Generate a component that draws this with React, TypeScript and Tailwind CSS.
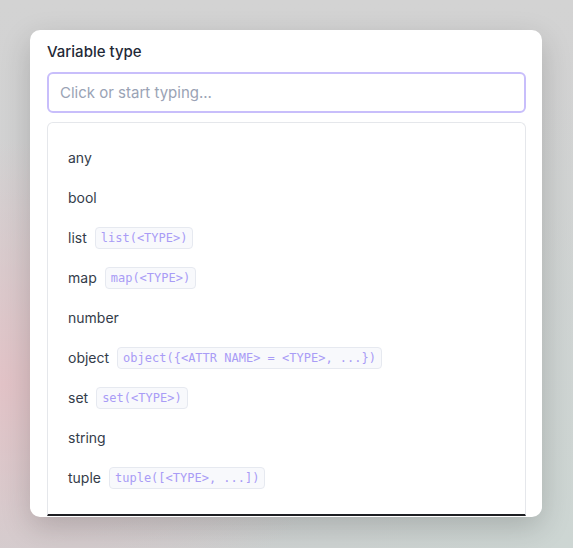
const types: { name: string; hint?: string }[] = [
  { name: "any" },
  { name: "bool" },
  { name: "list", hint: "list(<TYPE>)" },
  { name: "map", hint: "map(<TYPE>)" },
  { name: "number" },
  { name: "object", hint: "object({<ATTR NAME> = <TYPE>, ...})" },
  { name: "set", hint: "set(<TYPE>)" },
  { name: "string" },
  { name: "tuple", hint: "tuple([<TYPE>, ...])" },
];

export default function App() {
  return (
    <div className="w-[573px] h-[548px] overflow-hidden bg-[#cfd0d1] bg-[radial-gradient(ellipse_at_0%_70%,#e2c3c7_0%,rgba(226,195,199,0)_45%),radial-gradient(ellipse_at_100%_100%,#cdd6d3_0%,rgba(205,214,211,0)_60%),linear-gradient(180deg,#d3d3d3_0%,#cfd0d1_100%)] pt-[30px] font-['Inter',sans-serif]">
      {/* modal card */}
      <div className="mx-[30px] w-[512px] h-[487px] rounded-[10px] bg-white pl-[17px] pr-[16px] pt-3 shadow-[0_10px_30px_rgba(0,0,0,0.18)] overflow-hidden">
        <label className="block text-[15px] leading-5 font-medium text-[#1f2937]">Variable type</label>
        <input
          type="text"
          placeholder="Click or start typing..."
          className="mt-[10px] block w-full h-[41px] rounded-md border-2 border-[#c8befb] px-[11px] text-[15px] text-gray-700 placeholder:text-[#9aa3b5] outline-none"
        />

        {/* options list */}
        <div className="mt-[9px] h-[394px] rounded-t-md border border-[#e5e7eb] border-b-2 border-b-[#1d1e22] px-5 pt-[15px]">
          {types.map((t) => (
            <div key={t.name} className="flex h-10 items-center text-sm text-[#343c4a]">
              <span>{t.name}</span>
              {t.hint && (
                <span className="ml-2 rounded-sm border border-[#e6e9f0] bg-[#f8f9fc] px-[5px] py-[2px] font-['DejaVu_Sans_Mono',monospace] text-[12px] leading-4 text-[#a99cf6]">
                  {t.hint}
                </span>
              )}
            </div>
          ))}
        </div>
      </div>
    </div>
  );
}
